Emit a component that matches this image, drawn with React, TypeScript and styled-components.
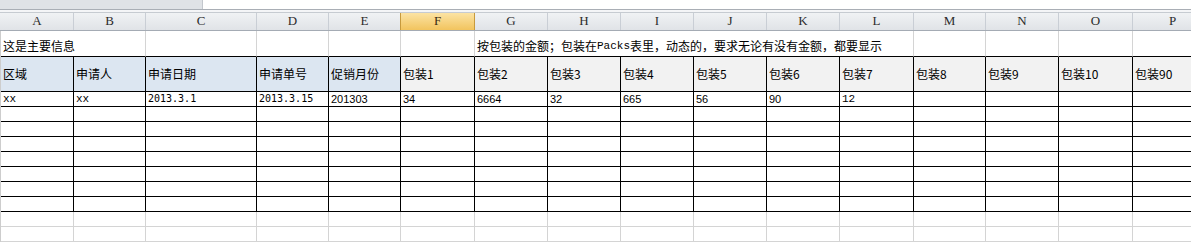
import React from "react";
import styled, { createGlobalStyle, css } from "styled-components";

const GlobalStyle = createGlobalStyle`
  html, body {
    margin: 0;
    padding: 0;
    background: #ffffff;
  }
  body {
    width: 1191px;
    height: 242px;
    overflow: hidden;
  }
`;

const CJK = `"Noto Sans CJK SC", "Liberation Sans", sans-serif`;
const MONO = `"Liberation Mono", "DejaVu Sans Mono", monospace`;
const SANS = `"Liberation Sans", Arial, sans-serif`;

// column widths include the right grid line
const COLUMN_WIDTHS = [73, 72, 111, 72, 72, 74, 73, 73, 73, 73, 73, 74, 72, 73, 74, 80];
const LETTERS = "ABCDEFGHIJKLMNOP".split("");
const ACTIVE_COLUMN = "F";

const gridColumns = COLUMN_WIDTHS.map((w) => `${w}px`).join(" ");

const INK = "#000000";
const FAINT = "#d4d4d4";

const Sheet = styled.div`
  width: 1191px;
  height: 242px;
  overflow: hidden;
  display: flex;
  flex-direction: column;
  background: #ffffff;
`;

const FormulaStrip = styled.div`
  display: flex;
  height: 9px;
  border-bottom: 1px solid #a9aeb5;
`;

const NameBox = styled.div`
  width: 202px;
  background: #dfe2e6;
  border-right: 1px solid #c3c7cd;
`;

const Spacer = styled.div`
  height: 2px;
  background: #f4f5f7;
`;

const ColumnBar = styled.div`
  display: grid;
  grid-template-columns: 1px ${gridColumns};
  height: 20px;
  box-sizing: border-box;
  border-top: 1px solid #c6cbd1;
  border-bottom: 1px solid #a4abb4;
  background: linear-gradient(#f0f2f4, #e0e3e7);
`;

const ColumnLetter = styled.div<{ $active?: boolean }>`
  display: flex;
  align-items: center;
  justify-content: center;
  box-sizing: border-box;
  border-right: 1px solid #c9ced5;
  font-family: "Liberation Serif", "DejaVu Serif", serif;
  font-size: 13px;
  color: #2b2b2b;
  ${(p) =>
    p.$active &&
    css`
      background: linear-gradient(#fbe3a4, #f2c45e);
      border-right-color: #c79a3d;
      border-left: 1px solid #c79a3d;
      margin-left: -1px;
      color: #3a2a10;
    `}
`;

const Body = styled.div`
  display: grid;
  grid-template-columns: 1px ${gridColumns};
  grid-template-rows: 26px 35px repeat(8, 15px) repeat(2, 15px);
`;

const Edge = styled.div`
  background: #cdcdcd;
`;

type Tone = "plain" | "blue" | "gray";
type Face = "cjk" | "mono" | "sans";

const fills: Record<Tone, string> = {
  plain: "#ffffff",
  blue: "#dce6f1",
  gray: "#f2f2f2",
};

const faces: Record<Face, string> = {
  cjk: CJK,
  mono: MONO,
  sans: SANS,
};

const Cell = styled.div<{
  $span?: number;
  $right: string;
  $bottom: string;
  $tone?: Tone;
  $face?: Face;
  $align?: "end" | "center";
}>`
  grid-column: span ${(p) => p.$span ?? 1};
  box-sizing: border-box;
  display: flex;
  align-items: ${(p) => (p.$align === "end" ? "flex-end" : "center")};
  padding: ${(p) => (p.$align === "end" ? "0 0 4px 2px" : "0 0 0 2px")};
  border-right: 1px solid ${(p) => p.$right};
  border-bottom: 1px solid ${(p) => p.$bottom};
  background: ${(p) => fills[p.$tone ?? "plain"]};
  font-family: ${(p) => faces[p.$face ?? "cjk"]};
  font-size: ${(p) => (p.$face === "cjk" || !p.$face ? "12px" : "11px")};
  line-height: 1;
  color: #000000;
  white-space: nowrap;
  overflow: hidden;
`;

const Latin = styled.span`
  font-family: ${MONO};
  font-size: 11px;
`;

const DateText = styled.span`
  font-family: "DejaVu Sans Mono", monospace;
  font-size: 10px;
`;

const HEADINGS = [
  "区域",
  "申请人",
  "申请日期",
  "申请单号",
  "促销月份",
  "包装1",
  "包装2",
  "包装3",
  "包装4",
  "包装5",
  "包装6",
  "包装7",
  "包装8",
  "包装9",
  "包装10",
  "包装90",
];

type Entry = { text: string; face: Face };

const FIRST_RECORD: Entry[] = [
  { text: "xx", face: "mono" },
  { text: "xx", face: "mono" },
  { text: "2013.3.1", face: "sans" },
  { text: "2013.3.15", face: "sans" },
  { text: "201303", face: "sans" },
  { text: "34", face: "sans" },
  { text: "6664", face: "sans" },
  { text: "32", face: "sans" },
  { text: "665", face: "sans" },
  { text: "56", face: "sans" },
  { text: "90", face: "sans" },
  { text: "12", face: "mono" },
];

const EMPTY_RULED_ROWS = 7;
const EMPTY_PLAIN_ROWS = 2;

const TitleRow = () => (
  <>
    <Edge />
    <Cell $span={2} $right={FAINT} $bottom={INK} $align="end">
      这是主要信息
    </Cell>
    <Cell $right={FAINT} $bottom={INK} />
    <Cell $right={FAINT} $bottom={INK} />
    <Cell $right={FAINT} $bottom={INK} />
    <Cell $right={FAINT} $bottom={INK} />
    <Cell $span={6} $right={FAINT} $bottom={INK} $align="end">
      按包装的金额；包装在<Latin>Packs</Latin>表里，动态的，要求无论有没有金额，都要显示
    </Cell>
    <Cell $right={FAINT} $bottom={INK} />
    <Cell $right={FAINT} $bottom={INK} />
    <Cell $right={FAINT} $bottom={INK} />
    <Cell $right={FAINT} $bottom={INK} />
  </>
);

const HeadingRow = () => (
  <>
    <Edge />
    {HEADINGS.map((h, i) => (
      <Cell key={h} $right={INK} $bottom={INK} $tone={i < 5 ? "blue" : "gray"}>
        {h}
      </Cell>
    ))}
  </>
);

const RecordRow = ({ entries, line }: { entries: Entry[]; line: string }) => (
  <>
    <Edge />
    {LETTERS.map((letter, i) => {
      const entry = entries[i];
      return (
        <Cell key={letter} $right={line} $bottom={line} $face={entry?.face ?? "sans"}>
          {entry && (entry.text.includes(".") ? <DateText>{entry.text}</DateText> : entry.text)}
        </Cell>
      );
    })}
  </>
);

export default function App() {
  return (
    <>
      <GlobalStyle />
      <Sheet>
        <FormulaStrip>
          <NameBox />
        </FormulaStrip>
        <Spacer />
        <ColumnBar>
          <div />
          {LETTERS.map((letter) => (
            <ColumnLetter key={letter} $active={letter === ACTIVE_COLUMN}>
              {letter}
            </ColumnLetter>
          ))}
        </ColumnBar>
        <Body>
          <TitleRow />
          <HeadingRow />
          <RecordRow entries={FIRST_RECORD} line={INK} />
          {Array.from({ length: EMPTY_RULED_ROWS }, (_, i) => (
            <RecordRow key={`ruled-${i}`} entries={[]} line={INK} />
          ))}
          {Array.from({ length: EMPTY_PLAIN_ROWS }, (_, i) => (
            <RecordRow key={`plain-${i}`} entries={[]} line={FAINT} />
          ))}
        </Body>
      </Sheet>
    </>
  );
}
